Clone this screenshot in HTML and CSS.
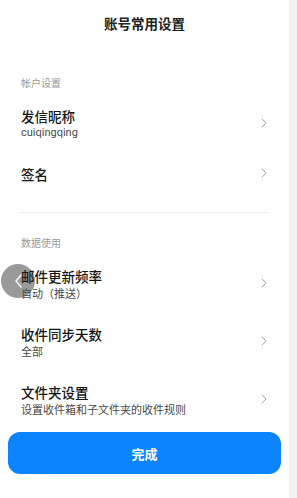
FILE: index.html
```html
<!DOCTYPE html>
<html lang="zh">
<head>
<meta charset="utf-8">
<link rel="stylesheet" href="styles.css">
</head>
<body>
<div class="screen">
  <main class="page">
    <header class="header">账号常用设置</header>

    <div class="section-label first">帐户设置</div>
    <div class="row">
      <div class="texts">
        <div class="title">发信昵称</div>
        <div class="sub latin">cuiqingqing</div>
      </div>
      <svg class="chev" width="6" height="10" viewBox="0 0 6 10"><polyline points="0.8,0.8 5,5 0.8,9.2" fill="none" stroke="#a9a9a9" stroke-width="1"/></svg>
    </div>
    <div class="row">
      <div class="texts">
        <div class="title">签名</div>
      </div>
      <svg class="chev" width="6" height="10" viewBox="0 0 6 10"><polyline points="0.8,0.8 5,5 0.8,9.2" fill="none" stroke="#a9a9a9" stroke-width="1"/></svg>
    </div>

    <div class="divider"></div>

    <div class="section-label">数据使用</div>
    <div class="row">
      <div class="texts">
        <div class="title">邮件更新频率</div>
        <div class="sub">自动（推送）</div>
      </div>
      <svg class="chev" width="6" height="10" viewBox="0 0 6 10"><polyline points="0.8,0.8 5,5 0.8,9.2" fill="none" stroke="#a9a9a9" stroke-width="1"/></svg>
    </div>
    <div class="row">
      <div class="texts">
        <div class="title">收件同步天数</div>
        <div class="sub">全部</div>
      </div>
      <svg class="chev" width="6" height="10" viewBox="0 0 6 10"><polyline points="0.8,0.8 5,5 0.8,9.2" fill="none" stroke="#a9a9a9" stroke-width="1"/></svg>
    </div>
    <div class="row">
      <div class="texts">
        <div class="title">文件夹设置</div>
        <div class="sub">设置收件箱和子文件夹的收件规则</div>
      </div>
      <svg class="chev" width="6" height="10" viewBox="0 0 6 10"><polyline points="0.8,0.8 5,5 0.8,9.2" fill="none" stroke="#a9a9a9" stroke-width="1"/></svg>
    </div>

    <button class="done">完成</button>

    <div class="back-bubble">
      <svg width="10" height="16" viewBox="0 0 10 16"><polyline points="7.5,1.5 2,8 7.5,14.5" fill="none" stroke="#ffffff" stroke-width="1.3"/></svg>
    </div>
  </main>
  <div class="strip"></div>
</div>
</body>
</html>
```
FILE: styles.css
```css
* { box-sizing: border-box; }
html, body { margin: 0; padding: 0; }
body {
  width: 297px;
  height: 498px;
  overflow: hidden;
  font-family: "Noto Sans CJK SC", "Noto Sans", Roboto, sans-serif;
  background: #ffffff;
}
.screen {
  display: flex;
  height: 498px;
}
.page {
  position: relative;
  width: 289px;
  height: 498px;
  background: #ffffff;
  display: flex;
  flex-direction: column;
}
.strip {
  width: 8px;
  height: 498px;
  background: #f2f2f2;
}
.header {
  height: 46px;
  line-height: 46px;
  text-align: center;
  font-size: 13.5px;
  font-weight: 700;
  color: #222222;
}
.section-label {
  margin-top: 23px;
  margin-bottom: 5px;
  padding: 0 21px;
  height: 14px;
  line-height: 14px;
  font-size: 10px;
  color: #9a9a9a;
}
.section-label.first {
  margin-top: 30px;
}
.row {
  position: relative;
  z-index: 1;
  display: flex;
  align-items: center;
  justify-content: space-between;
  padding: 12.5px 22px 12.5px 21px;
}
.texts {
  display: flex;
  flex-direction: column;
}
.title {
  font-size: 13.5px;
  line-height: 17px;
  font-weight: 500;
  color: #161616;
}
.sub {
  font-size: 11px;
  line-height: 16px;
  color: #4a4a4a;
}
.sub.latin {
  font-family: Roboto, "Noto Sans CJK SC", sans-serif;
}
.chev {
  display: block;
  margin-top: -2px;
}
.divider {
  margin: 17px 21px 0 21px;
  height: 1px;
  background: #ececec;
}
.done {
  margin: 3px 8px 0 8px;
  height: 42px;
  border: none;
  border-radius: 12px;
  background: #0c84fd;
  color: #ffffff;
  font-family: "Noto Sans CJK SC", "Noto Sans", sans-serif;
  font-size: 13px;
  font-weight: 700;
  padding: 0;
}
.back-bubble {
  position: absolute;
  z-index: 0;
  left: 1px;
  top: 264px;
  width: 34px;
  height: 34px;
  border-radius: 50%;
  background: #9a9a9a;
  display: flex;
  align-items: center;
  justify-content: center;
  padding-left: 2px;
}
.back-bubble svg { display: block; }
```
